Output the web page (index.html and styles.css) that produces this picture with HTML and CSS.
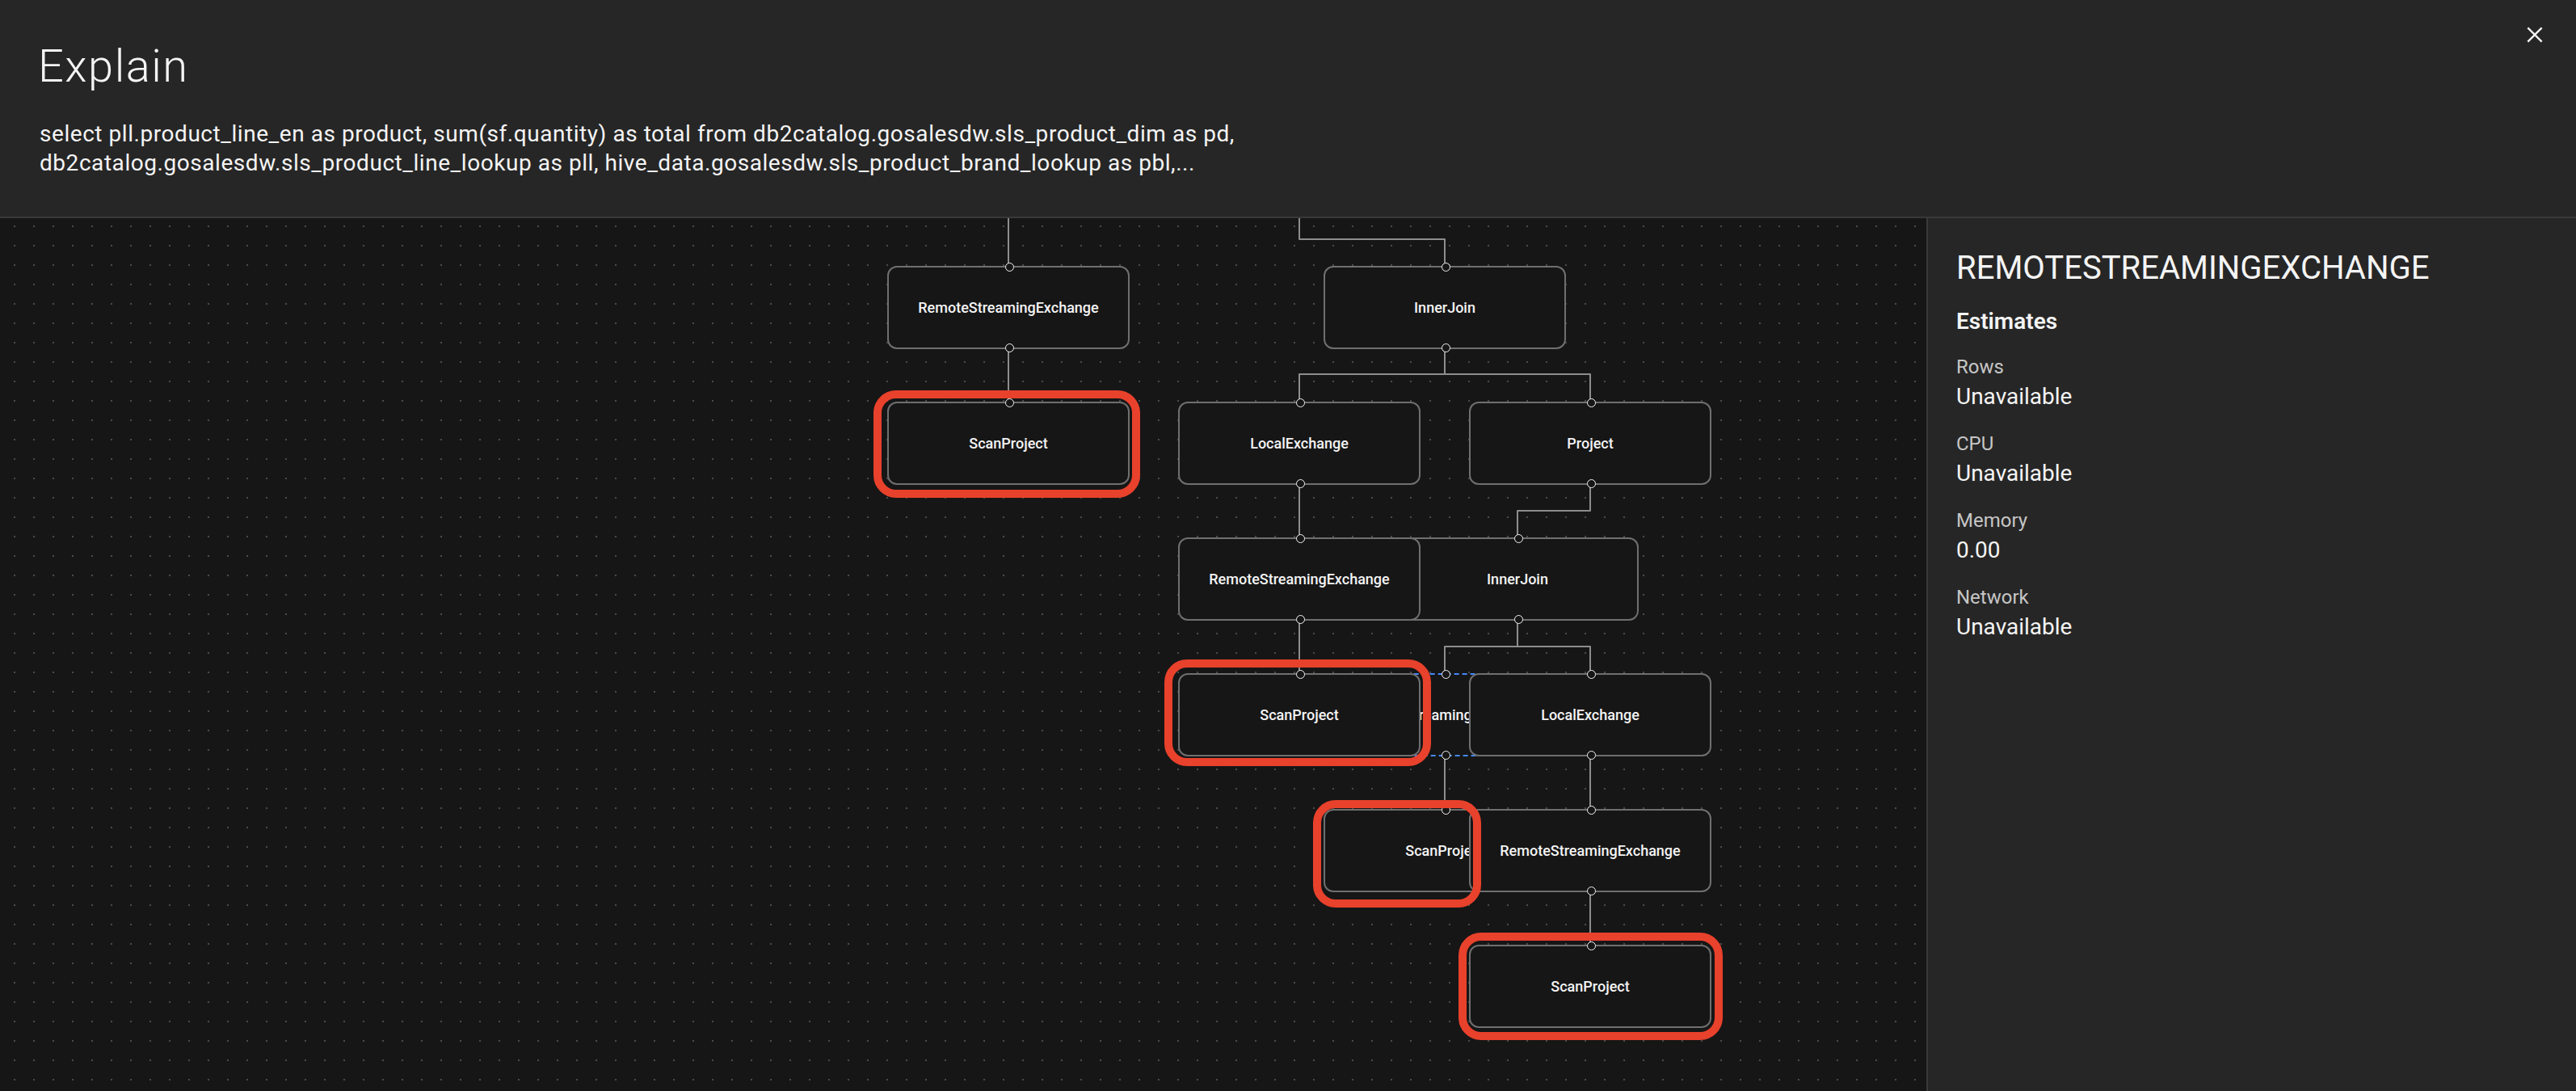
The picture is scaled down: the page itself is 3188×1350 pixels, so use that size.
FILE: index.html
```html
<!DOCTYPE html>
<html lang="en">
<head>
<meta charset="utf-8">
<title>Explain</title>
<link rel="stylesheet" href="styles.css">
</head>
<body>
<div class="modal">
  <header class="modal-header">
    <h1 class="modal-title">Explain</h1>
    <p class="query">
      <span class="query-line">select pll.product_line_en as product, sum(sf.quantity) as total from db2catalog.gosalesdw.sls_product_dim as pd,</span>
      <span class="query-line">db2catalog.gosalesdw.sls_product_line_lookup as pll, hive_data.gosalesdw.sls_product_brand_lookup as pbl,...</span>
    </p>
    <button class="close" aria-label="Close">
      <svg viewBox="0 0 32 32" aria-hidden="true"><path d="M24 9.4L22.6 8 16 14.6 9.4 8 8 9.4 14.6 16 8 22.6 9.4 24 16 17.4 22.6 24 24 22.6 17.4 16 24 9.4z"/></svg>
    </button>
  </header>
  <div class="modal-body">
    <section class="canvas">
      <svg class="edges" width="2384" height="1080" viewBox="0 0 2384 1080" aria-hidden="true">
        <path d="M1248 0 V59"/>
        <path d="M1608 0 V26 H1788 V59"/>
        <path d="M1248 162 V227"/>
        <path d="M1788 162 V193"/>
        <path d="M1608 227 V193 H1968 V227"/>
        <path d="M1608 330 V395"/>
        <path d="M1968 330 V362 H1878 V395"/>
        <path d="M1608 498 V563"/>
        <path d="M1878 498 V530"/>
        <path d="M1788 563 V530 H1968 V563"/>
        <path d="M1788 666 V731"/>
        <path d="M1968 666 V731"/>
        <path d="M1968 834 V899"/>
      </svg>

      <div class="node" style="left:1098px;top:59px">RemoteStreamingExchange</div>
      <div class="node" style="left:1638px;top:59px">InnerJoin</div>

      <div class="node node-leaf" style="left:1098px;top:227px">ScanProject</div>
      <div class="node" style="left:1458px;top:227px">LocalExchange</div>
      <div class="node" style="left:1818px;top:227px">Project</div>

      <div class="node" style="left:1728px;top:395px">InnerJoin</div>
      <div class="node" style="left:1458px;top:395px">RemoteStreamingExchange</div>

      <div class="node node-selected" style="left:1638px;top:563px">RemoteStreamingExchange</div>
      <div class="node node-leaf" style="left:1458px;top:563px">ScanProject</div>
      <div class="node" style="left:1818px;top:563px">LocalExchange</div>

      <div class="node node-leaf" style="left:1638px;top:731px">ScanProject</div>
      <div class="node" style="left:1818px;top:731px">RemoteStreamingExchange</div>

      <div class="node node-leaf" style="left:1818px;top:899px">ScanProject</div>

      <div class="ring" style="left:1081px;top:213px;width:330px;height:133px"></div>
      <div class="ring" style="left:1441px;top:546px;width:330px;height:132px"></div>
      <div class="ring" style="left:1625px;top:720px;width:208px;height:133px"></div>
      <div class="ring" style="left:1805px;top:884px;width:327px;height:133px"></div>
    </section>

    <aside class="panel">
      <h2 class="panel-title">REMOTESTREAMINGEXCHANGE</h2>
      <h3 class="panel-subtitle">Estimates</h3>
      <dl class="stats">
        <div class="stat">
          <dt class="stat-label">Rows</dt>
          <dd class="stat-value">Unavailable</dd>
        </div>
        <div class="stat">
          <dt class="stat-label">CPU</dt>
          <dd class="stat-value">Unavailable</dd>
        </div>
        <div class="stat">
          <dt class="stat-label">Memory</dt>
          <dd class="stat-value">0.00</dd>
        </div>
        <div class="stat">
          <dt class="stat-label">Network</dt>
          <dd class="stat-value">Unavailable</dd>
        </div>
      </dl>
    </aside>
  </div>
</div>
</body>
</html>
```

FILE: styles.css
```css
* {
  box-sizing: border-box;
}

html,
body {
  margin: 0;
  padding: 0;
}

body {
  width: 3188px;
  height: 1350px;
  overflow: hidden;
  background: #161616;
  color: #f4f4f4;
  font-family: Roboto, "Liberation Sans", Arial, sans-serif;
}

.modal {
  display: flex;
  flex-direction: column;
  height: 1350px;
}

/* Header */
.modal-header {
  position: relative;
  flex: none;
  height: 270px;
  padding: 46px 0 0 49px;
  background: #262626;
  border-bottom: 2px solid #393939;
}

.modal-title {
  margin: 0 0 0 -2px;
  font-size: 56px;
  line-height: 72px;
  font-weight: 300;
  letter-spacing: 1.5px;
  color: #f4f4f4;
}

.query {
  margin: 30px 0 0;
  font-size: 28px;
  line-height: 36px;
  font-weight: 400;
  letter-spacing: 0.55px;
  color: #f4f4f4;
}

.query-line {
  display: block;
  white-space: nowrap;
}

.close {
  position: absolute;
  top: 24px;
  right: 32px;
  width: 38px;
  height: 38px;
  padding: 0;
  border: 0;
  background: none;
  color: #f4f4f4;
  cursor: pointer;
}

.close svg {
  display: block;
  width: 38px;
  height: 38px;
  fill: currentColor;
}

/* Body */
.modal-body {
  flex: 1;
  display: flex;
  min-height: 0;
}

.canvas {
  position: relative;
  flex: 1;
  overflow: hidden;
  background-color: #161616;
  background-image: radial-gradient(circle, #4a4a4a 1px, transparent 1.6px);
  background-size: 24px 24px;
  background-position: 6px -2px;
}

.edges {
  position: absolute;
  left: 0;
  top: 0;
  pointer-events: none;
}

.edges path {
  fill: none;
  stroke: #8d8d8d;
  stroke-width: 2;
  stroke-linejoin: round;
}

.node {
  position: absolute;
  width: 300px;
  height: 103px;
  display: flex;
  align-items: center;
  justify-content: center;
  background: #161616;
  border: 2px solid #6f6f6f;
  border-radius: 12px;
  font-size: 18px;
  font-weight: 500;
  color: #f4f4f4;
  white-space: nowrap;
}

.node::before,
.node::after {
  content: "";
  position: absolute;
  left: 50%;
  width: 9px;
  height: 9px;
  margin-left: -4.5px;
  border: 1.5px solid #f4f4f4;
  border-radius: 50%;
  background: #161616;
}

.node::before {
  top: -6px;
}

.node::after {
  bottom: -6px;
}

.node-leaf::after {
  content: none;
}

.node-selected {
  border: 2px dashed #4589ff;
}

.ring {
  position: absolute;
  border: 10px solid #e8412c;
  border-radius: 28px;
  pointer-events: none;
}

/* Side panel */
.panel {
  flex: none;
  width: 804px;
  padding: 36px 32px 0 35px;
  background: #262626;
  border-left: 2px solid #393939;
}

.panel-title {
  margin: 0;
  font-size: 40px;
  line-height: 52px;
  font-weight: 400;
  color: #f4f4f4;
}

.panel-subtitle {
  margin: 22px 0 0;
  font-size: 28px;
  line-height: 36px;
  font-weight: 600;
  color: #f4f4f4;
}

.stats {
  margin: 22px 0 0;
}

.stat {
  margin-bottom: 24px;
}

.stat-label {
  font-size: 24px;
  line-height: 32px;
  color: #c6c6c6;
}

.stat-value {
  margin: 3px 0 0;
  font-size: 28px;
  line-height: 36px;
  color: #f4f4f4;
}
```
